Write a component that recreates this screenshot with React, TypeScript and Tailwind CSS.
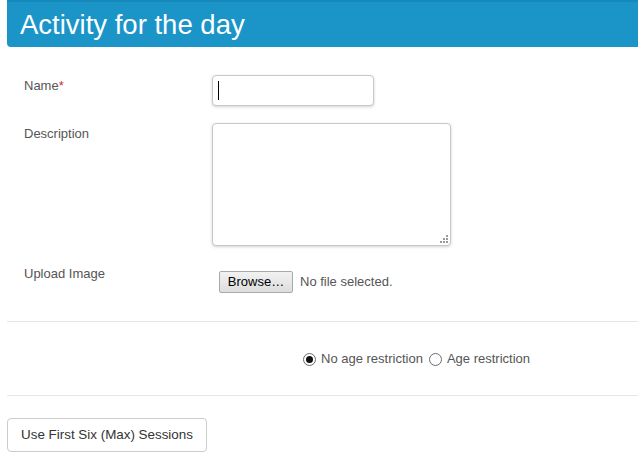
import type { ReactNode } from "react";

function FormRow({ label, required, children }: { label: string; required?: boolean; children: ReactNode }) {
  return (
    <div className="flex items-start">
      <div className="w-[188px] shrink-0 pt-[2px] text-[13px] leading-[18px] text-[#555]">
        {label}
        {required && <span className="text-[#c9302c]">*</span>}
      </div>
      <div className="flex-1">{children}</div>
    </div>
  );
}

function Radio({ checked, label }: { checked?: boolean; label: string }) {
  return (
    <label className="inline-flex items-center gap-[5px]">
      <span className="flex h-[13px] w-[13px] items-center justify-center rounded-full border border-[#6b6b6b] bg-white">
        {checked && <span className="h-[7px] w-[7px] rounded-full bg-[#111]" />}
      </span>
      <span>{label}</span>
    </label>
  );
}

function Divider() {
  return <div className="ml-[7px] border-t border-b border-t-[#e6e6e6] border-b-white" />;
}

export default function App() {
  return (
    <div className="min-h-[453px] w-[638px] overflow-hidden bg-white font-['Liberation_Sans',Arial,sans-serif]">
      <header className="ml-[7px] flex h-[47px] items-center rounded-bl-[4px] border-t-2 border-t-[#1689bb] bg-[#1b95c8] pl-[13px]">
        <h1 className="text-[27.5px] leading-none text-white">Activity for the day</h1>
      </header>

      <form className="flex flex-col gap-[17px] pl-[24px] pt-[28px]">
        <FormRow label="Name" required>
          <div className="flex h-[31px] w-[162px] items-center rounded-[4px] border border-[#c8c8c8] bg-white pl-[5px] shadow-[0_1px_3px_rgba(0,0,0,0.18)]">
            <span className="h-[19px] w-px bg-black" />
          </div>
        </FormRow>

        <FormRow label="Description">
          <div className="relative h-[123px] w-[239px] rounded-[4px] border border-[#c8c8c8] bg-white shadow-[0_1px_3px_rgba(0,0,0,0.18)]">
            <svg className="absolute bottom-[2px] right-[2px]" width="8" height="8" viewBox="0 0 8 8">
              <rect x="6" y="0" width="2" height="2" fill="#9a9a9a" />
              <rect x="3" y="3" width="2" height="2" fill="#9a9a9a" />
              <rect x="6" y="3" width="2" height="2" fill="#9a9a9a" />
              <rect x="0" y="6" width="2" height="2" fill="#9a9a9a" />
              <rect x="3" y="6" width="2" height="2" fill="#9a9a9a" />
              <rect x="6" y="6" width="2" height="2" fill="#9a9a9a" />
            </svg>
          </div>
        </FormRow>

        <FormRow label="Upload Image">
          <div className="flex items-center gap-[7px] pl-[7px] pt-[8px] text-[13px] text-[#555]">
            <button
              type="button"
              className="h-[22px] w-[74px] rounded-[2px] border border-[#a9a9a9] bg-gradient-to-b from-[#f2f2f2] to-[#dddddd] text-[13px] text-black"
            >
              Browse…
            </button>
            <span>No file selected.</span>
          </div>
        </FormRow>
      </form>

      <div className="mt-[28px]">
        <Divider />
      </div>

      <div className="flex h-[72px] items-center pl-[303px] text-[13px] text-[#555]">
        <div className="flex items-center gap-[6px]">
          <Radio checked label="No age restriction" />
          <Radio label="Age restriction" />
        </div>
      </div>

      <Divider />

      <div className="pl-[7px] pt-[21px]">
        <button
          type="button"
          className="h-[34px] w-[200px] rounded-[4px] border border-[#cccccc] bg-white text-[13.4px] text-[#333]"
        >
          Use First Six (Max) Sessions
        </button>
      </div>
    </div>
  );
}
